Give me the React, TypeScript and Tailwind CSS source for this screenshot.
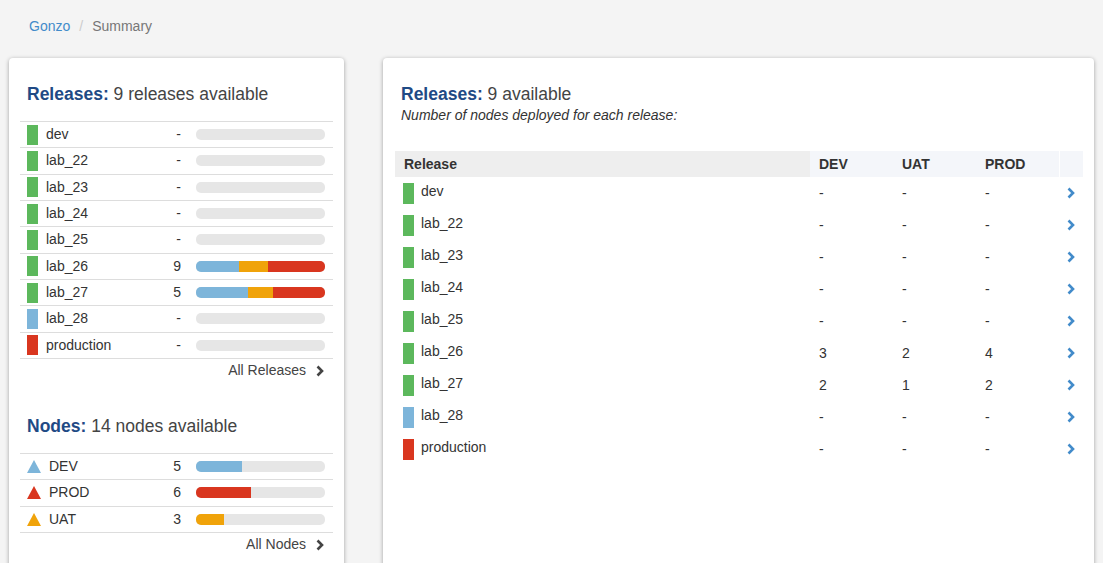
const GREEN = "bg-[#5cb85c]";
const BLUE = "bg-[#7db5da]";
const RED = "bg-[#d9361f]";

type Release = { name: string; color: string; dev: number; uat: number; prod: number };

const releases: Release[] = [
  { name: "dev", color: GREEN, dev: 0, uat: 0, prod: 0 },
  { name: "lab_22", color: GREEN, dev: 0, uat: 0, prod: 0 },
  { name: "lab_23", color: GREEN, dev: 0, uat: 0, prod: 0 },
  { name: "lab_24", color: GREEN, dev: 0, uat: 0, prod: 0 },
  { name: "lab_25", color: GREEN, dev: 0, uat: 0, prod: 0 },
  { name: "lab_26", color: GREEN, dev: 3, uat: 2, prod: 4 },
  { name: "lab_27", color: GREEN, dev: 2, uat: 1, prod: 2 },
  { name: "lab_28", color: BLUE, dev: 0, uat: 0, prod: 0 },
  { name: "production", color: RED, dev: 0, uat: 0, prod: 0 },
];

const nodes = [
  { name: "DEV", fill: "#7db5da", bar: "bg-[#7db5da]", count: 5 },
  { name: "PROD", fill: "#d9361f", bar: "bg-[#d9361f]", count: 6 },
  { name: "UAT", fill: "#f0a30a", bar: "bg-[#f0a30a]", count: 3 },
];

function Chevron({ className }: { className?: string }) {
  return (
    <svg viewBox="0 0 8 12" className={className} fill="none" stroke="currentColor" strokeWidth="2.6" strokeLinejoin="miter">
      <path d="M1.5 1.5 L6 6 L1.5 10.5" />
    </svg>
  );
}

function Triangle({ fill }: { fill: string }) {
  return (
    <svg width="14" height="13" viewBox="0 0 14 13">
      <path d="M7 0 L14 13 L0 13 Z" fill={fill} />
    </svg>
  );
}

function MoreLink({ label }: { label: string }) {
  return (
    <div className="flex justify-end items-center gap-[10px] pr-[9px] h-[22px] text-[14px] text-[#444]">
      <span>{label}</span>
      <Chevron className="w-[8px] h-[12px] text-[#444]" />
    </div>
  );
}

function ReleaseSummary() {
  return (
    <div>
      <h2 className="pl-[7px] text-[17.5px] leading-[20px] text-[#444]">
        <span className="font-bold text-[#1f4a85]">Releases:</span> 9 releases available
      </h2>
      <div className="mt-[17px] border-b border-[#dddddd]">
        {releases.map((r) => {
          const total = r.dev + r.uat + r.prod;
          return (
            <div key={r.name} className="flex items-center h-[26.33px] border-t border-[#dddddd] pl-[7px] pr-[8px]">
              <div className={`w-[11px] h-[20px] ${r.color}`} />
              <div className="flex-1 ml-[8px] text-[14px] text-[#333]">{r.name}</div>
              <div className="w-[30px] text-right mr-[15px] text-[14px] text-[#333]">{total ? total : "-"}</div>
              <div className="w-[129px] h-[11px] rounded-[5px] bg-[#e6e6e6] overflow-hidden flex">
                {total > 0 && (
                  <>
                    <div className="bg-[#7db5da] h-full" style={{ width: `${(r.dev / total) * 100}%` }} />
                    <div className="bg-[#f0a30a] h-full" style={{ width: `${(r.uat / total) * 100}%` }} />
                    <div className="bg-[#d9361f] h-full" style={{ width: `${(r.prod / total) * 100}%` }} />
                  </>
                )}
              </div>
            </div>
          );
        })}
      </div>
      <div className="mt-[1px]">
        <MoreLink label="All Releases" />
      </div>
    </div>
  );
}

function NodeSummary() {
  return (
    <div className="mt-[34px]">
      <h2 className="pl-[7px] text-[17.5px] leading-[20px] text-[#444]">
        <span className="font-bold text-[#1f4a85]">Nodes:</span> 14 nodes available
      </h2>
      <div className="mt-[17px] border-b border-[#dddddd]">
        {nodes.map((n) => (
          <div key={n.name} className="flex items-center h-[26.33px] border-t border-[#dddddd] pl-[7px] pr-[8px]">
            <Triangle fill={n.fill} />
            <div className="flex-1 ml-[8px] text-[14px] text-[#333]">{n.name}</div>
            <div className="w-[30px] text-right mr-[15px] text-[14px] text-[#333]">{n.count}</div>
            <div className="w-[129px] h-[11px] rounded-[5px] bg-[#e6e6e6] overflow-hidden flex">
              <div className={`${n.bar} h-full`} style={{ width: `${(n.count / 14) * 100}%` }} />
            </div>
          </div>
        ))}
      </div>
      <div className="mt-[1px]">
        <MoreLink label="All Nodes" />
      </div>
    </div>
  );
}

function ReleaseTable() {
  const cell = (v: number) => (v ? v : "-");
  return (
    <div>
      <div className="px-[6px]">
        <h2 className="text-[17.5px] leading-[20px] text-[#444]">
          <span className="font-bold text-[#1f4a85]">Releases:</span> 9 available
        </h2>
        <p className="mt-[1px] text-[14px] italic text-[#333]">Number of nodes deployed for each release:</p>
      </div>
      <div className="mt-[25px]">
        <div className="flex h-[26px] text-[14px] font-bold text-[#333]">
          <div className="w-[415px] shrink-0 bg-[#eeeeee] flex items-center pl-[9px]">Release</div>
          <div className="flex shrink-0 bg-[#f4f6fa]">
            <div className="w-[83px] flex items-center pl-[9px]">DEV</div>
            <div className="w-[83px] flex items-center pl-[9px]">UAT</div>
            <div className="w-[83px] flex items-center pl-[9px]">PROD</div>
          </div>
          <div className="w-[23px] shrink-0 ml-[1px] bg-[#f4f6fa]" />
        </div>
        {releases.map((r) => (
          <div key={r.name} className="flex items-center h-[32px] text-[14px] text-[#333]">
            <div className="w-[415px] shrink-0 flex items-center pl-[8px]">
              <div className={`w-[11px] h-[21px] ${r.color}`} />
              <span className="ml-[7px] -mt-[3px]">{r.name}</span>
            </div>
            <div className="w-[83px] shrink-0 pl-[9px]">{cell(r.dev)}</div>
            <div className="w-[83px] shrink-0 pl-[9px]">{cell(r.uat)}</div>
            <div className="w-[83px] shrink-0 pl-[9px]">{cell(r.prod)}</div>
            <div className="w-[24px] shrink-0 flex justify-center">
              <Chevron className="w-[8px] h-[12px] text-[#428bca]" />
            </div>
          </div>
        ))}
      </div>
    </div>
  );
}

export default function App() {
  return (
    <div className="min-h-screen bg-[#f4f4f4] font-['Liberation_Sans',Arial,sans-serif] pl-[9px] pr-[9px]">
      <div className="flex items-center h-[52px] pl-[20px] text-[14px]">
        <span className="text-[#428bca]">Gonzo</span>
        <span className="mx-[9px] text-[#cccccc]">/</span>
        <span className="text-[#777777]">Summary</span>
      </div>
      <div className="flex gap-[39px] mt-[6px] items-stretch">
        <div className="w-[335px] shrink-0 bg-white rounded-[4px] shadow-[0_1px_4px_rgba(0,0,0,0.35)] px-[11px] pt-[26px] pb-[30px]">
          <ReleaseSummary />
          <NodeSummary />
        </div>
        <div className="w-[711px] shrink-0 bg-white rounded-[4px] shadow-[0_1px_4px_rgba(0,0,0,0.35)] pl-[12px] pr-[11px] pt-[26px]">
          <ReleaseTable />
        </div>
      </div>
    </div>
  );
}
